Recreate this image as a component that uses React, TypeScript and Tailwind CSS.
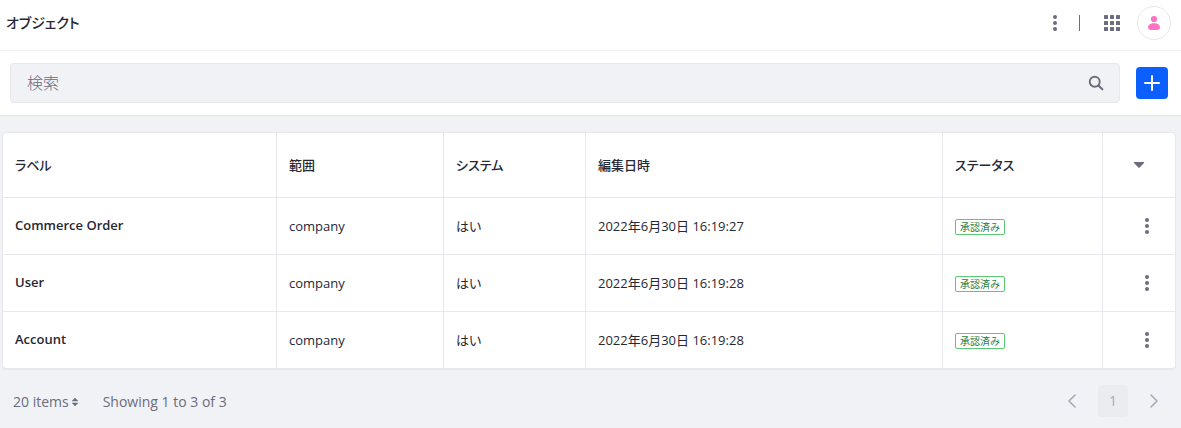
type ObjectDefinition = {
  label: string;
  scope: string;
  system: string;
  modified: string;
  status: string;
};

const OBJECTS: ObjectDefinition[] = [
  { label: "Commerce Order", scope: "company", system: "はい", modified: "2022年6月30日 16:19:27", status: "承認済み" },
  { label: "User", scope: "company", system: "はい", modified: "2022年6月30日 16:19:28", status: "承認済み" },
  { label: "Account", scope: "company", system: "はい", modified: "2022年6月30日 16:19:28", status: "承認済み" },
];

const HEADERS = ["ラベル", "範囲", "システム", "編集日時", "ステータス"];

const KebabIcon = () => (
  <svg viewBox="0 0 16 16" className="h-4 w-4 fill-current" aria-hidden="true">
    <circle cx="8" cy="2" r="2" />
    <circle cx="8" cy="8" r="2" />
    <circle cx="8" cy="14" r="2" />
  </svg>
);

const AppsIcon = () => (
  <svg viewBox="0 0 16 16" className="h-4 w-4 fill-current" aria-hidden="true">
    {[0, 6, 12].map((y) => [0, 6, 12].map((x) => <rect key={`${x}-${y}`} x={x} y={y} width="4" height="4" rx="0.6" />))}
  </svg>
);

const UserIcon = () => (
  <svg viewBox="0 0 16 16" className="h-4 w-4 fill-[#ff73c3]" aria-hidden="true">
    <circle cx="8" cy="4" r="3.1" />
    <path d="M2 12.3C2 9.9 4.6 8.3 8 8.3s6 1.6 6 4c0 1.9-1.2 2.7-3 2.7H5c-1.8 0-3-.8-3-2.7z" />
  </svg>
);

const SearchIcon = () => (
  <svg viewBox="0 0 16 16" className="h-4 w-4" fill="none" stroke="currentColor" aria-hidden="true">
    <circle cx="6.7" cy="6.7" r="5" strokeWidth="1.9" />
    <path d="M10.5 10.5l3.8 3.8" strokeWidth="2.1" strokeLinecap="round" />
  </svg>
);

function ObjectTable() {
  return (
    <div className="overflow-hidden rounded border border-[#e7e7ed] bg-white shadow-[0_1px_0_#e7e7ed]">
      <table className="w-full table-fixed border-separate border-spacing-0 text-left text-[13px]">
        <colgroup>
          <col className="w-[274px]" />
          <col className="w-[167px]" />
          <col className="w-[142px]" />
          <col />
          <col className="w-40" />
          <col className="w-[72px]" />
        </colgroup>
        <thead>
          <tr className="h-[65px]">
            {HEADERS.map((header) => (
              <th key={header} scope="col" className="border-r border-b border-[#e7e7ed] px-3 pt-0.5 font-medium">
                {header}
              </th>
            ))}
            <th scope="col" className="border-b border-[#e7e7ed] text-center">
              <button type="button" aria-label="列" className="inline-flex h-8 w-8 items-center justify-center text-[#6b6c7e]">
                <svg viewBox="0 0 12 6" className="h-[6px] w-3 fill-current" aria-hidden="true">
                  <path d="M1.4 0h9.2c.6 0 .8.6.4 1L6.6 5.6a.8.8 0 0 1-1.2 0L1 1C.6.6.8 0 1.4 0z" />
                </svg>
              </button>
            </th>
          </tr>
        </thead>
        <tbody className="[&>tr:last-child>td]:border-b-0">
          {OBJECTS.map((item, index) => (
            <tr key={item.label} className={index === OBJECTS.length - 1 ? "h-14" : "h-[57px]"}>
              <td className="border-r border-b border-[#e7e7ed] px-3 font-semibold">
                <a href="#">{item.label}</a>
              </td>
              <td className="border-r border-b border-[#e7e7ed] px-3 pt-0.5">{item.scope}</td>
              <td className="border-r border-b border-[#e7e7ed] px-3 pt-0.5">{item.system}</td>
              <td className="border-r border-b border-[#e7e7ed] px-3 pt-0.5">{item.modified}</td>
              <td className="border-r border-b border-[#e7e7ed] px-3 pt-0.5">
                <span className="flex h-4 w-fit items-center rounded-xs border border-[#5aca75] px-1 text-[10px] leading-3 text-[#287d3c]">
                  {item.status}
                </span>
              </td>
              <td className="border-b border-[#e7e7ed] px-3">
                <button type="button" aria-label="操作" className="ml-auto flex h-8 w-8 items-center justify-center text-[#6b6c7e]">
                  <KebabIcon />
                </button>
              </td>
            </tr>
          ))}
        </tbody>
      </table>
    </div>
  );
}

function PaginationBar() {
  return (
    <div className="flex items-center justify-between py-4 pr-1.5 pl-[11px] text-sm text-[#6b6c7e]">
      <div className="flex items-center gap-6 pt-0.5">
        <button type="button" className="flex items-center gap-0.5">
          20 items
          <svg viewBox="0 0 8 10" className="h-[10px] w-2 fill-current" aria-hidden="true">
            <path d="M4 1l2.8 3H1.2zM4 9L1.2 6h5.6z" stroke="currentColor" strokeWidth="0.5" strokeLinejoin="round" />
          </svg>
        </button>
        <p>Showing 1 to 3 of 3</p>
      </div>
      <nav aria-label="ページ" className="flex items-center gap-2.5 text-[#a7a9bc]">
        <button type="button" aria-label="前へ" className="flex h-8 w-8 items-center justify-center">
          <svg viewBox="0 0 16 16" className="h-4 w-4" fill="none" stroke="currentColor" strokeWidth="1.6" aria-hidden="true">
            <path d="M11 2L5 8l6 6" strokeLinecap="round" strokeLinejoin="round" />
          </svg>
        </button>
        <button type="button" aria-current="page" className="flex h-8 w-[30px] items-center justify-center rounded bg-[#ebecf0]">
          1
        </button>
        <button type="button" aria-label="次へ" className="flex h-8 w-8 items-center justify-center">
          <svg viewBox="0 0 16 16" className="h-4 w-4" fill="none" stroke="currentColor" strokeWidth="1.6" aria-hidden="true">
            <path d="M5 2l6 6-6 6" strokeLinecap="round" strokeLinejoin="round" />
          </svg>
        </button>
      </nav>
    </div>
  );
}

export default function App() {
  return (
    <div className="min-h-screen bg-[#f1f2f5] font-['Open_Sans','Noto_Sans_CJK_JP',sans-serif] text-[#272833] [font-feature-settings:'palt']">
      <header className="flex h-[51px] items-center justify-between border-b border-[#f1f2f5] bg-white pr-2.5 pb-1 pl-1.5">
        <h1 className="text-sm font-medium">オブジェクト</h1>
        <div className="flex items-center text-[#6b6c7e]">
          <button type="button" aria-label="オプション" className="flex h-8 w-8 items-center justify-center">
            <KebabIcon />
          </button>
          <span className="mr-4 ml-2 h-4 w-px bg-[#6b6c7e]" />
          <button type="button" aria-label="アプリケーション" className="flex h-8 w-8 items-center justify-center">
            <AppsIcon />
          </button>
          <button
            type="button"
            aria-label="ユーザー"
            className="ml-[9px] flex h-[34px] w-[34px] items-center justify-center rounded-full border border-[#e7e7ed] bg-white"
          >
            <UserIcon />
          </button>
        </div>
      </header>

      <div className="flex items-center gap-4 border-b border-[#e7e7ed] bg-white py-3 pr-[13px] pl-2.5">
        <form className="flex h-10 flex-1 items-center rounded border border-[#e7e7ed] bg-[#f1f2f5] pr-[15px] pl-4">
          <input
            type="text"
            aria-label="検索"
            placeholder="検索"
            className="min-w-0 flex-1 bg-transparent text-base font-light outline-none placeholder:text-[#6b6c7e]"
          />
          <button type="button" aria-label="検索する" className="text-[#6b6c7e]">
            <SearchIcon />
          </button>
        </form>
        <button type="button" aria-label="追加" className="flex h-8 w-8 items-center justify-center rounded bg-[#0b5fff] text-white">
          <svg viewBox="0 0 16 16" className="h-4 w-4" fill="none" stroke="currentColor" strokeWidth="2" strokeLinecap="round" aria-hidden="true">
            <path d="M8 1v14M1 8h14" />
          </svg>
        </button>
      </div>

      <main className="pt-4 pr-[5px] pl-0.5">
        <ObjectTable />
        <PaginationBar />
      </main>
    </div>
  );
}
